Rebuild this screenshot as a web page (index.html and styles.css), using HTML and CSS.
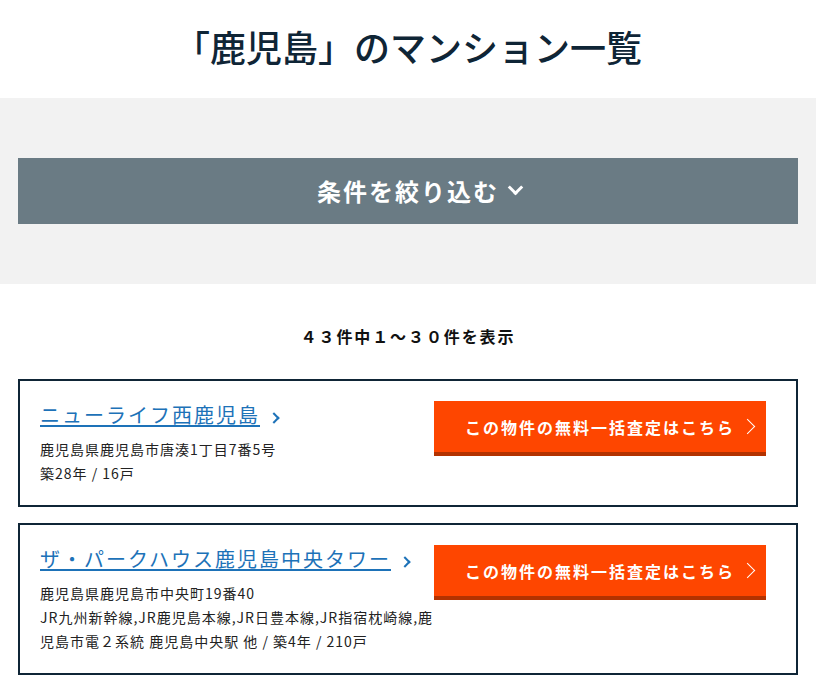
FILE: index.html
```html
<!DOCTYPE html>
<html lang="ja">
<head>
<meta charset="utf-8">
<title>「鹿児島」のマンション一覧</title>
<link rel="stylesheet" href="styles.css">
</head>
<body>
<header class="page-head">
  <h1 class="page-title">「鹿児島」のマンション一覧</h1>
</header>
<section class="filter">
  <button class="filter-btn" type="button"><span class="filter-label">条件を絞り込む</span></button>
</section>
<main class="results">
  <p class="count">４３件中１～３０件を表示</p>
  <ul class="list">
    <li class="card">
      <div class="card-info">
        <p class="card-title"><a href="#" class="card-link">ニューライフ西鹿児島</a><span class="arrow"></span></p>
        <p class="card-meta">鹿児島県鹿児島市唐湊1丁目7番5号<br>築28年 / 16戸</p>
      </div>
      <a href="#" class="cta">この物件の無料一括査定はこちら</a>
    </li>
    <li class="card">
      <div class="card-info">
        <p class="card-title"><a href="#" class="card-link">ザ・パークハウス鹿児島中央タワー</a><span class="arrow"></span></p>
        <p class="card-meta">鹿児島県鹿児島市中央町19番40<br>JR九州新幹線,JR鹿児島本線,JR日豊本線,JR指宿枕崎線,鹿児島市電２系統 鹿児島中央駅 他 / 築4年 / 210戸</p>
      </div>
      <a href="#" class="cta">この物件の無料一括査定はこちら</a>
    </li>
  </ul>
</main>
</body>
</html>
```

FILE: styles.css
```css
* { box-sizing: border-box; }
html, body {
  margin: 0;
  padding: 0;
  background: #ffffff;
  font-family: "Noto Sans CJK JP", "Noto Sans", sans-serif;
  color: #222222;
}
p { margin: 0; }

.page-head {
  height: 98px;
  padding-top: 22px;
}
.page-title {
  margin: 0;
  text-align: center;
  font-size: 36px;
  line-height: 48px;
  font-weight: 500;
  color: #0f2536;
}

.filter {
  background: #f2f2f2;
  padding: 60px 18px;
}
.filter-btn {
  display: flex;
  align-items: center;
  justify-content: center;
  width: 100%;
  height: 66px;
  border: 0;
  margin: 0;
  padding: 0;
  background: #6a7b84;
  color: #ffffff;
  font-family: inherit;
  font-size: 24px;
  font-weight: 700;
  letter-spacing: 2px;
  cursor: pointer;
}
.filter-label {
  position: relative;
  line-height: 32px;
}
.filter-label::after {
  content: "";
  position: absolute;
  left: calc(100% + 11px);
  top: 7px;
  width: 8px;
  height: 8px;
  border-right: 3px solid #ffffff;
  border-bottom: 3px solid #ffffff;
  transform: rotate(45deg);
}

.results {
  padding: 40px 18px 0;
}
.count {
  text-align: center;
  font-size: 16px;
  line-height: 24px;
  font-weight: 700;
  letter-spacing: 1.9px;
  color: #111111;
  margin-bottom: 31px;
}
.list {
  list-style: none;
  margin: 0;
  padding: 0;
  display: flex;
  flex-direction: column;
  gap: 16px;
}
.card {
  display: flex;
  align-items: flex-start;
  border: 2px solid #0f2536;
  padding: 20px 30px 20px 20px;
}
.card-info {
  flex: 1;
  min-width: 0;
}
.card-title {
  font-size: 20px;
  line-height: 28px;
  letter-spacing: 2px;
  margin-bottom: 8px;
}
.card-link {
  color: #1d72b8;
  text-decoration: underline;
  text-decoration-thickness: 2px;
  text-underline-offset: 2px;
}
.arrow {
  display: inline-block;
  width: 8px;
  height: 8px;
  margin-left: 10px;
  border-top: 2px solid #1d72b8;
  border-right: 2px solid #1d72b8;
  transform: rotate(45deg);
  vertical-align: 1px;
}
.card-meta {
  font-size: 14px;
  line-height: 24px;
  letter-spacing: 1px;
  color: #222222;
}
.cta {
  position: relative;
  flex: 0 0 332px;
  display: flex;
  align-items: center;
  justify-content: center;
  height: 55px;
  background: #fe4600;
  border-bottom: 4px solid #b33200;
  color: #ffffff;
  font-size: 16px;
  font-weight: 700;
  letter-spacing: 2px;
  text-decoration: none;
}
.cta::after {
  content: "";
  position: absolute;
  right: 13px;
  top: 50%;
  width: 10px;
  height: 10px;
  margin-top: -6px;
  border-top: 1.5px solid #ffffff;
  border-right: 1.5px solid #ffffff;
  transform: rotate(45deg);
}
```
